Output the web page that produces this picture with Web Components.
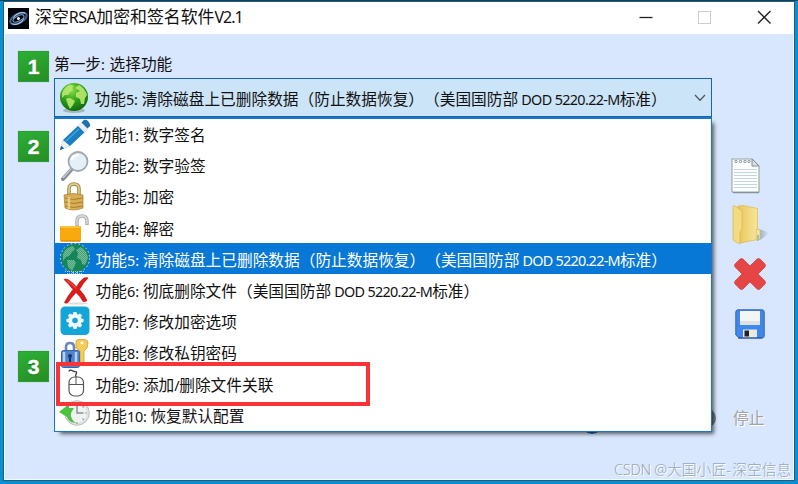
<!DOCTYPE html>
<html lang="zh-CN">
<head>
<meta charset="utf-8">
<title>深空RSA加密和签名软件V2.1</title>
<style>
html,body{margin:0;width:798px;height:484px;overflow:hidden}
body{font-family:"Noto Sans","Noto Sans CJK SC",sans-serif;color:#111;text-spacing-trim:space-all;font-kerning:none}
</style>
</head>
<body>
<crypto-app></crypto-app>
<script>
const I = {
app:`<svg width="21" height="21" viewBox="0 0 21 21"><rect width="21" height="21" fill="#03050c"/><g transform="rotate(-27 10.5 10.5)" fill="none"><ellipse cx="10.5" cy="10.5" rx="9" ry="4.5" stroke="#41628e" stroke-width="2"/><ellipse cx="10.5" cy="10.5" rx="6" ry="2.6" stroke="#6f95c2" stroke-width="1.2"/><path d="M2 12C5 16 12 16 15 13M19 9C16 5 9 5 6 8" stroke="#b6cfe8" stroke-width=".9"/><circle cx="10.5" cy="10.5" r="1.5" fill="#eef5ff"/></g></svg>`,
globe:`<svg width="30" height="32" viewBox="0 0 30 32"><defs><radialGradient id="g" cx=".4" cy=".25" r=".8"><stop offset="0" stop-color="#8be04c"/><stop offset=".5" stop-color="#2fa01c"/><stop offset="1" stop-color="#0a660c"/></radialGradient></defs><ellipse cx="15" cy="28.5" rx="11" ry="2.5" fill="#8a9499" opacity=".6"/><circle cx="15" cy="15" r="14" fill="url(#g)"/><path d="M3 11Q5 5 11 2.5L15 4 13 6 14 8 11 10 9 13 6 13 3 16ZM7 17Q10 15 13 17L16 19 14 23 11 27 9 23ZM16 6L20 3Q26 6 28 13L26 16 25 22 22 22 21 17 17 15 17 11 21 9Z" fill="#b9e86d" opacity=".9"/></svg>`,
pencil:`<svg width="32" height="32" viewBox="0 0 32 32"><path d="M1 31L4 21 22 4 28 11 11 27Z" fill="#187fc0"/><path d="M4 21L11 27 5 29.5 2 27Z" fill="#eee"/><path d="M1 31L2.2 27 5 29.3Z" fill="#17649b"/><path d="M18.5 6.5L22 3 29 10 25.5 13.5Z" fill="#e8eef4"/><path d="M22.5 3.5L25 1Q27 0 29 2L31 5Q32 7 30 8L28.5 9.5Z" fill="#1c72ad"/><path d="M7 22L20 10" stroke="#4ba1d8" stroke-width="1.5"/></svg>`,
lens:`<svg width="30" height="32" viewBox="0 0 30 32"><path d="M3 29L11 20" stroke="#858895" stroke-width="4" stroke-linecap="round"/><path d="M3 28L11 19" stroke="#c7c9d2" stroke-width="1.5"/><circle cx="18" cy="11.5" r="9.5" fill="#e4f0f8" stroke="#a2a7ae" stroke-width="1.8"/><path d="M12 10Q13 5 19 5" fill="none" stroke="#fff" stroke-width="2.5"/></svg>`,
lock:`<svg width="28" height="32" viewBox="0 0 28 32"><path d="M8 14V8Q8 3 13 3T18 8V14" fill="none" stroke="#a08a45" stroke-width="3.6"/><path d="M8 14V8Q8 3 13 3T18 8V14" fill="none" stroke="#e4d392" stroke-width="1.5"/><path d="M3 14Q12 11 22 14V27Q12 31 4 27Z" fill="#d9ae52" stroke="#a3803a" stroke-width=".7"/><path d="M4 17Q12 20 22 17M4 21Q12 24 22 21M4 25Q12 28 22 25" fill="none" stroke="#a47e30"/><path d="M8 16V28" stroke="#f8df91" stroke-width="2.5" opacity=".7"/></svg>`,
unlock:`<svg width="32" height="32" viewBox="0 0 32 32"><path d="M18 14V9Q18 4 23 4T28 9V13" fill="none" stroke="#b0b0b0" stroke-width="3.5"/><path d="M18 13V9Q18 4 23 4T28 9V12" fill="none" stroke="#dedede" stroke-width="1.3"/><rect x="1" y="14" width="21" height="15.5" rx="1" fill="#f8a90d"/><path d="M2 15H21" stroke="#ffc23a" stroke-width="2"/><path d="M2 29H21" stroke="#d88300"/></svg>`,
selglobe:`<svg width="32" height="31" viewBox="0 0 32 31"><defs><pattern id="d" width="2" height="2" patternUnits="userSpaceOnUse"><rect width="1" height="1" fill="#0878d7"/><rect x="1" y="1" width="1" height="1" fill="#0878d7"/></pattern></defs><circle cx="16" cy="15" r="14" fill="#1a8a30"/><path d="M4 11Q7 4 14 3L16 6 13 9 10 13 7 14 4 18ZM8 17L15 17 17 20 13 28 9 24ZM17 7L22 4Q28 8 29 15L26 22 23 21 22 17 18 15 19 10Z" fill="#7cc070"/><circle cx="16" cy="15" r="14" fill="url(#d)" opacity=".5"/><circle cx="16" cy="15" r="14.6" fill="none" stroke="#d5eafa" stroke-width="1" stroke-dasharray="1.5 2.5"/><path d="M6 28.5H26M8 30.5H24" stroke="#a5c9dc" stroke-dasharray="1 1"/></svg>`,
redx:`<svg width="30" height="32" viewBox="0 0 30 32"><ellipse cx="16" cy="29.5" rx="12" ry="1" fill="#ddd"/><path d="M4 5.5Q5 4.5 8 5.5 13 8.5 16.5 13 20 6.5 24 4 27 3 28 4 23 9 19.5 15.5 24 20 27 26.5 26 28 23 27.5 20 22 16 18.5 11 24 8 28.5 5 29.5 4.5 28.5 8 21.5 13 15.5 9 10 4 5.5Z" fill="#df1a1a" stroke="#be090d" stroke-width=".6"/><path d="M7 6.5Q12 9.5 16 14.5" stroke="#f46255" fill="none"/></svg>`,
gear:`<svg width="30" height="30" viewBox="0 0 30 30"><rect x=".5" y=".5" width="29" height="28.5" rx="4.5" fill="#12a5d5"/><g transform="translate(15 14.5)"><g fill="#f2fbff"><path d="M-1.5-8.5H1.5L2.5-5H-2.5Z"/><path d="M-1.5-8.5H1.5L2.5-5H-2.5Z" transform="rotate(45)"/><path d="M-1.5-8.5H1.5L2.5-5H-2.5Z" transform="rotate(90)"/><path d="M-1.5-8.5H1.5L2.5-5H-2.5Z" transform="rotate(135)"/><path d="M-1.5-8.5H1.5L2.5-5H-2.5Z" transform="rotate(180)"/><path d="M-1.5-8.5H1.5L2.5-5H-2.5Z" transform="rotate(225)"/><path d="M-1.5-8.5H1.5L2.5-5H-2.5Z" transform="rotate(270)"/><path d="M-1.5-8.5H1.5L2.5-5H-2.5Z" transform="rotate(315)"/><circle r="6.4"/></g><circle r="2.8" fill="#12a5d5"/></g></svg>`,
keylock:`<svg width="30" height="32" viewBox="0 0 30 32"><path d="M16 5Q16 2.5 19 2.5H25Q28 3 28 6L27 11 24 14V27L20 29V14L16 11Z" fill="#f4cc58" stroke="#d09a2c" stroke-width=".8"/><circle cx="22" cy="6" r="1.4" fill="#fff"/><path d="M6 15V10Q6 6 10 6T14 10V15" fill="none" stroke="#6b88b2" stroke-width="2.6"/><rect x="1.5" y="13.5" width="18" height="17" rx="2" fill="#4e83cd" stroke="#3763a8"/><path d="M4 15V28M16 15V28" stroke="#b4d2f5" stroke-width="2.5"/><circle cx="10" cy="19" r="2" fill="#17356a"/><path d="M10 19V25" stroke="#17356a" stroke-width="2"/></svg>`,
mouse:`<svg width="30" height="32" viewBox="0 0 30 32"><path d="M9 3.5C9 1.500 11.500 2 13 3S17 3 16.500 5 15 6.500 16 9" fill="none" stroke="#333" stroke-width="1.2"/><rect x="9" y="9" width="14.5" height="19" rx="5.5" fill="#fff" stroke="#555" stroke-width="1.2"/><path d="M9 16.5H23.5M16 9V16.5" stroke="#555"/></svg>`,
clock:`<svg width="32" height="32" viewBox="0 0 32 32"><circle cx="18" cy="14" r="12.3" fill="#dde1e2" stroke="#bbc1c3"/><circle cx="18" cy="14" r="10" fill="#f1f3f3"/><path d="M18 6V14H24.5" stroke="#8a9395" stroke-width="1.5" fill="none"/><path d="M18 3V5M18 23V25M28 14H26M11 21L12.5 19.5M25 21L23.5 19.5M25 7L23.5 8.5" stroke="#9ba2a4" stroke-width="1.2"/><path d="M0 13L10 5V9H15L12 14Q11 20 17 24L12 23Q9 21 8 18Z" fill="#4dc23e"/></svg>`,
note:`<svg width="32" height="38" viewBox="0 0 32 38"><path d="M2 2H22L29 9V35H2Z" fill="#fcfdfd" stroke="#9aa3a7" stroke-width="1.1"/><path d="M22 2V9H29Z" fill="#d9dfe2" stroke="#848e93"/><path d="M4 12.5H27M4 15.5H27M4 18.5H27M4 21.5H27M4 24.5H27M4 27.5H27M4 30.5H27" stroke="#c3d6dd"/><g fill="none" stroke="#8d979c"><circle cx="6" cy="4.5" r="1.2"/><circle cx="10.5" cy="4.5" r="1.2"/><circle cx="15" cy="4.5" r="1.2"/><circle cx="19" cy="4.5" r="1.2"/></g><path d="M3 35.7H29" stroke="#7d868b"/></svg>`,
folder:`<svg width="38" height="42" viewBox="0 0 38 42"><defs><linearGradient id="f"><stop stop-color="#e8c65d"/><stop offset="1" stop-color="#fae9a2"/></linearGradient><linearGradient id="h"><stop stop-color="#71869e" stop-opacity=".75"/><stop offset="1" stop-color="#71869e" stop-opacity="0"/></linearGradient></defs><path d="M25 37Q33 34 37 29L33 27 26 25Z" fill="url(#h)"/><path d="M6 2L11 1.5 25.5 4.5V25L28 26.5V35L8 39Z" fill="url(#f)" stroke="#dbb94e" stroke-width=".7"/><path d="M1 2.5Q1 1 3 2L9 6Q10 7 10 9V25L8 28V40L2 37Q1 36 1 34Z" fill="#f4da83" stroke="#d8b54c" stroke-width=".7"/><path d="M24.5 25L28 26V35L24 35Z" fill="#f9e5a0" stroke="#d9bd62" stroke-width=".7"/><path d="M25 31L27 31V35L25 35Z" fill="#8ac5d1"/></svg>`,
cross:`<svg width="34" height="34" viewBox="0 0 34 34"><path d="M7 2Q8.5 1 10 2L17 9 24 2Q25.5 1 27 2L32 7Q33 8.5 32 10L25 17 32 24Q33 25.5 32 27L27 32Q25.5 33 24 32L17 25 10 32Q8.5 33 7 32L2 27Q1 25.5 2 24L9 17 2 10Q1 8.5 2 7Z" fill="#e54545" stroke="#c94a50" stroke-width=".8"/></svg>`,
save:`<svg width="30" height="30" viewBox="0 0 30 30"><path d="M3 .8H27Q29.2.8 29.2 3V27Q29.2 29 27 29H4L.8 26V3Q.8.8 3 .8Z" fill="#3f87ea" stroke="#3366b5"/><rect x="5" y="2" width="20" height="14" fill="#f3f6f5"/><path d="M5 12H25V16H5Z" fill="#dce2e2"/><rect x="8" y="20.5" width="14" height="8" fill="#e9e9e5"/><rect x="9.5" y="21.5" width="4.5" height="6" fill="#222"/><path d="M3 29H27" stroke="#284e92"/></svg>`
};

// Splits a label into CJK and Latin runs; each Latin run is tracked to its given width.
class FitLabel extends HTMLElement{
  connectedCallback(){
    const r=this.attachShadow({mode:'open'});
    const widths=(this.getAttribute('widths')||'').split(',').map(Number);
    r.innerHTML='<style>:host{display:flex;align-items:baseline;white-space:pre;line-height:24px;font-size:var(--cjk,15.7px)}b{font-weight:inherit;font-size:var(--latin,14.4px);white-space:pre;display:block}</style>';
    let i=0;
    for(const run of this.getAttribute('text').match(/[\x20-\x7e]+|[^\x20-\x7e]+/g)){
      const latin=/^[\x20-\x7e]/.test(run), e=document.createElement(latin?'b':'span');
      e.textContent=run; r.append(e);
      if(latin){const w=widths[i++];e.style.letterSpacing=(w-e.getBoundingClientRect().width)/run.length+'px';e.style.width=w+'px';}
    }
  }
}
customElements.define('fit-label',FitLabel);

class UiIcon extends HTMLElement{
  connectedCallback(){this.attachShadow({mode:'open'}).innerHTML='<style>:host{display:flex;flex:none}svg{display:block}</style>'+I[this.getAttribute('name')];}
}
customElements.define('ui-icon',UiIcon);

class StepBadge extends HTMLElement{
  connectedCallback(){this.attachShadow({mode:'open'}).innerHTML='<style>:host{display:grid;place-items:center;box-sizing:border-box;width:31px;height:31px;background:linear-gradient(160deg,#2cb035,#268e24);border:1px solid #2e9b38;box-shadow:0 0 1px #8fc295;color:#fff;font:bold 21px/28px "Liberation Sans",sans-serif;-webkit-text-stroke:.5px #fff;text-shadow:0 1px 1px #126518}</style><slot></slot>';}
}
customElements.define('step-badge',StepBadge);

class TitleBar extends HTMLElement{
  connectedCallback(){this.attachShadow({mode:'open'}).innerHTML=`<style>
  :host{display:flex;height:32px;background:#fff;align-items:center;box-sizing:border-box;padding:0 20px 0 4px;--cjk:16.9px;--latin:16px}
  fit-label{margin-left:6px;margin-top:-3px;flex:1}.c{display:block}</style>
  <ui-icon name="app"></ui-icon><fit-label text="深空RSA加密和签名软件V2.1" widths="27.5,28"></fit-label>
  <svg class="c" width="136" height="18" viewBox="0 0 136 18"><path d="M1.5 8.5H14.5" stroke="#222" stroke-width="1.3"/><rect x="60.5" y="2.5" width="12" height="12" fill="none" stroke="#ccc"/><path d="M120 2L132.500 14.5M132.500 2L120 14.5" stroke="#222" stroke-width="1.4"/></svg>`;}
}
customElements.define('title-bar',TitleBar);

class ComboBox extends HTMLElement{
  connectedCallback(){this.attachShadow({mode:'open'}).innerHTML=`<style>
  :host{display:flex;position:relative;box-sizing:border-box;width:658px;height:39px;border:1.5px solid #1664ae;background:#cce4f7;align-items:center;padding:0 5px 0 4px}
  fit-label{flex:1;margin-left:5.5px;margin-top:3px}ui-icon{margin-top:1px}
  ::slotted(*){position:absolute;left:-1px;top:37.5px}</style>
  <ui-icon name="globe"></ui-icon><fit-label text="功能5: 清除磁盘上已删除数据（防止数据恢复）（美国国防部 DOD 5220.22-M标准）" widths="15.8,101.5"></fit-label>
  <svg width="12" height="8" viewBox="0 0 12 8"><path d="M1 1L6 6.2 11 1" fill="none" stroke="#4b5965" stroke-width="1.3"/></svg><slot></slot>`;}
}
customElements.define('combo-box',ComboBox);

class MenuItem extends HTMLElement{
  connectedCallback(){this.attachShadow({mode:'open'}).innerHTML=`<style>
  :host{display:flex;height:31.2px;align-items:center;padding-left:4px}
  :host([selected]){background:#0878d7;color:#fff}
  i{width:32px;height:31.2px;display:grid;place-items:center;overflow:hidden}fit-label{margin-left:4.5px;margin-top:3px}</style>
  <i><ui-icon name="${this.getAttribute('icon')}"></ui-icon></i><fit-label text="${this.getAttribute('text')}" widths="${this.getAttribute('widths')||'16'}"></fit-label>`;}
}
customElements.define('menu-item',MenuItem);

class DropMenu extends HTMLElement{
  connectedCallback(){this.attachShadow({mode:'open'}).innerHTML=`<style>
  :host{display:block;box-sizing:border-box;width:658px;height:315px;background:#fff;border:1px solid #1977cb;border-top-width:2px;border-bottom-width:1.5px;box-shadow:4px 4px 4px -2px #0009;z-index:2}
  div{position:absolute;box-sizing:border-box;left:1px;top:243.5px;width:314px;height:44px;border:4px solid #fa3336}</style><slot></slot><div></div>`;}
}
customElements.define('drop-menu',DropMenu);

class CryptoApp extends HTMLElement{
  connectedCallback(){this.attachShadow({mode:'open'}).innerHTML=`<style>
  :host{display:block;box-sizing:border-box;width:798px;height:484px;padding:1px 3px 3px 3px;background:#0791d3}
  .win{box-sizing:border-box;width:792px;height:480px;border:1px solid #235d7b;background:#d8e7fd;box-shadow:inset 0 0 0 1px #f5faff}
  .body{display:grid;grid-template-columns:31px 658px 66px;padding:1px 0 0 14px;column-gap:5px;height:445px}
  .steps{padding-top:16px}.steps step-badge:nth-child(2){margin-top:49px}.steps step-badge:nth-child(3){margin-top:189px}
  .main{padding-top:16px}.main>fit-label{height:26px;padding-top:1px}
  .side{display:flex;flex-direction:column;align-items:flex-start;padding-top:122px}
  .side ui-icon:nth-child(1){margin-left:13px}.side ui-icon:nth-child(2){margin:9px 0 11px 15px}.side ui-icon:nth-child(3){margin-left:16px}.side ui-icon:nth-child(4){margin:18px 0 0 18px}
  .bottom{display:flex;align-items:center;margin-top:67px;color:#a3a3a3;text-shadow:1px 1px #fff;width:66px}
  .orb{width:20px;height:20px;margin-left:-21px;border-radius:50%;background:#777e87}.bottom fit-label{margin-left:17px}
  .blue{position:absolute;left:582px;top:413.5px;width:20px;height:20px;border-radius:50%;background:#2267a8}
  .mark{position:absolute;left:614px;top:457px;color:#99a6b8;text-shadow:1px 1px #fff;--cjk:14.8px;--latin:14.5px;font-weight:300}
  .top{position:absolute;left:0;top:0;width:798px;height:1px;background:#123f5b}
  </style>
  <div class="win"><title-bar></title-bar><div class="body">
  <div class="steps"><step-badge>1</step-badge><step-badge>2</step-badge><step-badge>3</step-badge></div>
  <div class="main"><fit-label text="第一步: 选择功能" widths="8.5"></fit-label>
  <combo-box><drop-menu>
  <menu-item icon="pencil" text="功能1: 数字签名"></menu-item>
  <menu-item icon="lens" text="功能2: 数字验签"></menu-item>
  <menu-item icon="lock" text="功能3: 加密"></menu-item>
  <menu-item icon="unlock" text="功能4: 解密"></menu-item>
  <menu-item selected icon="selglobe" text="功能5: 清除磁盘上已删除数据（防止数据恢复）（美国国防部 DOD 5220.22-M标准）" widths="16,100.5"></menu-item>
  <menu-item icon="redx" text="功能6: 彻底删除文件（美国国防部 DOD 5220.22-M标准）" widths="16,101"></menu-item>
  <menu-item icon="gear" text="功能7: 修改加密选项"></menu-item>
  <menu-item icon="keylock" text="功能8: 修改私钥密码"></menu-item>
  <menu-item icon="mouse" text="功能9: 添加/删除文件关联" widths="16,5"></menu-item>
  <menu-item icon="clock" text="功能10: 恢复默认配置" widths="23.5"></menu-item>
  </drop-menu></combo-box></div>
  <div class="side"><ui-icon name="note"></ui-icon><ui-icon name="folder"></ui-icon><ui-icon name="cross"></ui-icon><ui-icon name="save"></ui-icon>
  <div class="bottom"><span class="orb"></span><fit-label text="停止"></fit-label></div></div>
  </div></div><span class="blue"></span><span class="top"></span>
  <fit-label class="mark" text="CSDN @大国小匠-深空信息" widths="53,6"></fit-label>`;}
}
customElements.define('crypto-app',CryptoApp);
</script>
</body>
</html>
